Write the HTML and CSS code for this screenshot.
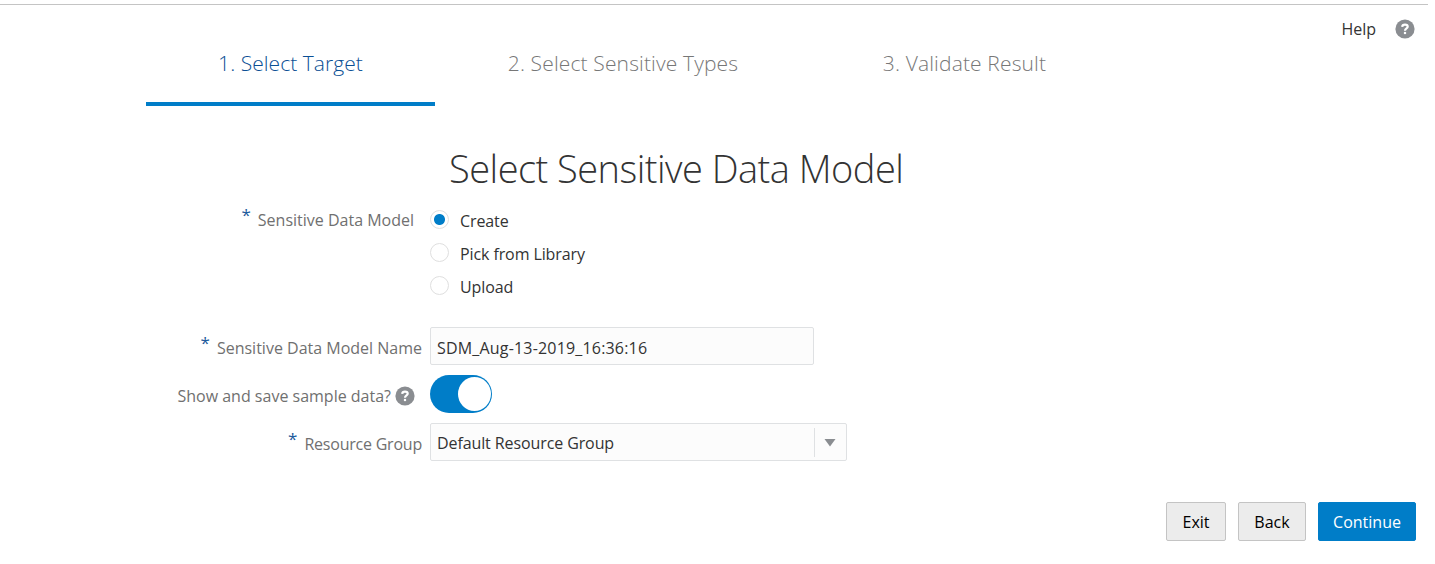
FILE: index.html
```html
<!DOCTYPE html>
<html lang="en">
<head>
<meta charset="utf-8">
<title>Select Sensitive Data Model</title>
<link rel="stylesheet" href="styles.css">
</head>
<body>
<header class="topbar">
  <nav class="steps">
    <div class="step step-current"><span>1. Select Target</span></div>
    <div class="step step-types"><span>2. Select Sensitive Types</span></div>
    <div class="step step-result"><span>3. Validate Result</span></div>
  </nav>
  <div class="help"><span>Help</span>
    <svg class="help-icon" viewBox="0 0 20 20"><circle cx="10" cy="10" r="9.6" fill="#8a8d91"/><path d="M7.2 7.9C7.3 6.4 8.3 5.7 10 5.7S12.7 6.4 12.7 7.7C12.7 9.4 10 9.3 10 11.7" fill="none" stroke="#fff" stroke-width="2.2"/><rect x="8.9" y="12.9" width="2.2" height="2.2" fill="#fff"/></svg>
  </div>
</header>
<main class="content">
  <h1 class="title"><span>Select Sensitive Data Model</span></h1>
  <div class="row row-model">
    <div class="label"><b class="req">*</b><span>Sensitive Data Model</span></div>
    <div class="radios">
      <label class="radio"><i class="dot dot-on"></i><span>Create</span></label>
      <label class="radio"><i class="dot"></i><span>Pick from Library</span></label>
      <label class="radio"><i class="dot"></i><span>Upload</span></label>
    </div>
  </div>
  <div class="row row-name">
    <div class="label"><b class="req">*</b><span>Sensitive Data Model Name</span></div>
    <div class="field"><span>SDM_Aug-13-2019_16:36:16</span></div>
  </div>
  <div class="row row-sample">
    <div class="label"><span>Show and save sample data?</span>
      <svg class="help-icon" viewBox="0 0 20 20"><circle cx="10" cy="10" r="9.6" fill="#8a8d91"/><path d="M7.2 7.9C7.3 6.4 8.3 5.7 10 5.7S12.7 6.4 12.7 7.7C12.7 9.4 10 9.3 10 11.7" fill="none" stroke="#fff" stroke-width="2.2"/><rect x="8.9" y="12.9" width="2.2" height="2.2" fill="#fff"/></svg>
    </div>
    <div class="switch"><i class="thumb"></i></div>
  </div>
  <div class="row row-group">
    <div class="label"><b class="req">*</b><span>Resource Group</span></div>
    <div class="field select"><span>Default Resource Group</span><div class="arrow"><svg width="12" height="8" viewBox="0 0 12 8"><path d="M.5 0h11L6 7.5z" fill="#8a8d91"/></svg></div></div>
  </div>
</main>
<footer class="actions">
  <button class="btn btn-exit"><span>Exit</span></button>
  <button class="btn btn-back"><span>Back</span></button>
  <button class="btn btn-primary"><span>Continue</span></button>
</footer>
</body>
</html>
```
FILE: styles.css
```css
* { box-sizing: border-box; }
body { margin: 0; width: 1435px; height: 564px; background: #fff; color: #333; font: 400 16px/24px "Open Sans", "Noto Sans", sans-serif; overflow: hidden; }
span { white-space: nowrap; }
.topbar { display: flex; justify-content: space-between; width: 1428px; height: 102px; margin-top: 4px; padding-left: 146px; border-top: 1px solid #c4c4c4; }
.steps { display: flex; height: 101px; }
.step { display: flex; justify-content: center; width: 376px; padding-top: 42px; font-size: 21px; line-height: 32px; font-weight: 300; color: #777; letter-spacing: .14px; }
.step-current { width: 289px; color: #0b4f94; letter-spacing: .05px; border-bottom: 4px solid #007dc8; }
.step-result { width: 307px; }
.help { display: flex; align-items: center; height: 24px; margin-top: 12px; padding-right: 13px; gap: 19px; }
.help-icon { width: 20px; height: 20px; flex: none; }
.content { padding-top: 34px; }
.title { margin: 0 0 0 449px; height: 61px; font-size: 38px; line-height: 56px; font-weight: 300; letter-spacing: -.52px; }
.row { display: grid; grid-template-columns: 422px 417px; column-gap: 8px; }
.label { display: flex; justify-content: flex-end; color: #707070; }
.req { margin-right: 7px; font-size: 17px; font-weight: 400; color: #1c5a9c; line-height: 14px; }
.row-model { height: 126px; padding-top: 7px; }
.row-model .label { padding-right: 8px; }
.radios { display: grid; grid-template-rows: 33px 33px 33px; align-items: start; }
.radio { display: flex; gap: 11px; line-height: 26px; letter-spacing: -.1px; }
.dot { width: 19px; height: 19px; margin-top: 2px; border: 1px solid #dfdfdf; border-radius: 50%; }
.dot-on { background: radial-gradient(circle, #007dc8 5px, #fff 6px); }
.row-name { height: 48px; }
.row-name .label, .row-group .label { padding-top: 9px; }
.row-group .label span { letter-spacing: -.22px; }
.field { display: flex; align-items: center; width: 384px; height: 38px; padding: 4px 0 0 6px; background: #fcfcfc; border: 1px solid #dfe1e3; border-radius: 2px; letter-spacing: .18px; }
.row-sample { height: 48px; }
.row-sample .label { padding: 9px 7px 0 0; gap: 4px; }
.row-sample .help-icon { margin-top: 2px; }
.switch { width: 62px; height: 38px; padding: 2px 1px 2px 28px; border-radius: 19px; background: #007dc8; }
.thumb { display: block; width: 33px; height: 34px; border-radius: 50%; background: #fff; }
.select { width: 417px; padding-top: 0; justify-content: space-between; letter-spacing: -.1px; }
.select span { padding-top: 2px; }
.arrow { display: flex; align-items: center; width: 32px; height: 29px; padding: 2px 0 0 9px; border-left: 1px solid #dfe1e3; }
.actions { display: flex; justify-content: flex-end; gap: 12px; padding: 0 19px 0 0; margin-top: 41px; }
.btn { height: 39px; padding: 0; font: inherit; color: #000; background: #ececec; border: 1px solid #c4c4c4; border-radius: 2px; }
.btn-exit { width: 60px; }
.btn-back { width: 68px; }
.btn-primary { width: 98px; background: #007dc8; border-color: #007dc8; color: #fff; }
```
